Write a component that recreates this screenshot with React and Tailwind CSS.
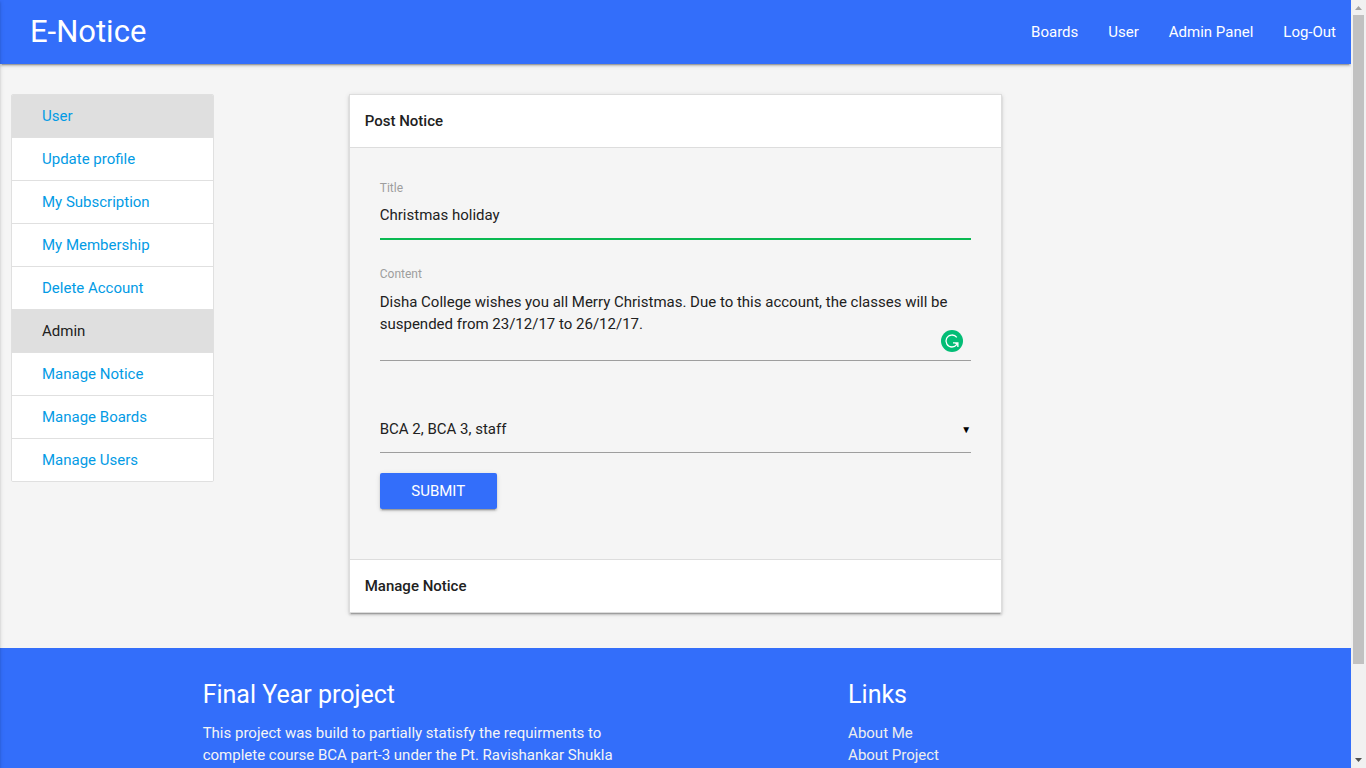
const navLinks = ["Boards", "User", "Admin Panel", "Log-Out"];

const sideItems = [
  { label: "User", tone: "activeLink" },
  { label: "Update profile" },
  { label: "My Subscription" },
  { label: "My Membership" },
  { label: "Delete Account" },
  { label: "Admin", tone: "heading" },
  { label: "Manage Notice" },
  { label: "Manage Boards" },
  { label: "Manage Users" },
];

const footerLinks = ["About Me", "About Project"];

function Navbar() {
  return (
    <nav className="relative z-10 flex h-16 shrink-0 items-center justify-between bg-[#336efa] text-white shadow-[0_2px_2px_0_rgba(0,0,0,0.14),0_1px_5px_0_rgba(0,0,0,0.12),0_3px_1px_-2px_rgba(0,0,0,0.2)]">
      <a href="#" className="pl-[30px] text-[31px] leading-[64px]">
        E-Notice
      </a>
      <ul className="flex">
        {navLinks.map((label) => (
          <li key={label}>
            <a href="#" className="block px-[15px] leading-[64px]">
              {label}
            </a>
          </li>
        ))}
      </ul>
    </nav>
  );
}

function Sidebar() {
  return (
    <aside className="w-1/6 px-[11px]">
      <ul className="divide-y divide-[#e0e0e0] overflow-hidden rounded-xs border border-[#e0e0e0] bg-white">
        {sideItems.map(({ label, tone }) => (
          <li key={label} className={tone ? "bg-[#dfdfdf]" : "bg-white"}>
            {tone === "heading" ? (
              <span className="block px-[30px] py-[10px]">{label}</span>
            ) : (
              <a href="#" className="block px-[30px] py-[10px] text-[#039be5]">
                {label}
              </a>
            )}
          </li>
        ))}
      </ul>
    </aside>
  );
}

function AssistantBadge() {
  return (
    <svg viewBox="0 0 22 22" className="absolute right-2 bottom-[9px] size-[22px]" aria-hidden="true">
      <circle cx="11" cy="11" r="11" fill="#03bd76" />
      <path d="M15.8 7.4A6 6 0 1 0 11 17c2 0 3.6-.8 4.9-2.6" fill="none" stroke="#fff" strokeWidth="1.3" />
      <path d="M12 12.8h4.9v4.2" fill="none" stroke="#fff" strokeWidth="1.3" />
      <path d="M13.8 13h3v3z" fill="#fff" />
    </svg>
  );
}

function PostForm() {
  return (
    <form className="flex flex-col items-start px-[30px] pt-[30px] pb-[50px]" onSubmit={(e) => e.preventDefault()}>
      <label htmlFor="title" className="text-xs leading-5 text-[#9e9e9e]">
        Title
      </label>
      <input
        id="title"
        type="text"
        defaultValue="Christmas holiday"
        className="h-[42px] w-full border-b-2 border-[#0ab952] bg-transparent pb-[6px] outline-none"
      />

      <label htmlFor="content" className="mt-6 text-xs leading-5 text-[#9e9e9e]">
        Content
      </label>
      <div className="relative flex w-full">
        <textarea
          id="content"
          spellCheck={false}
          defaultValue="Disha College wishes you all Merry Christmas. Due to this account, the classes will be suspended from 23/12/17 to 26/12/17."
          className="h-[77px] w-full resize-none overflow-hidden border-b border-[#9e9e9e] bg-transparent pt-[7px] outline-none"
        />
        <AssistantBadge />
      </div>

      <div className="relative mt-[46px] flex w-full">
        <select
          aria-label="Boards"
          className="h-[46px] w-full appearance-none border-b border-[#9e9e9e] bg-transparent pb-[2px] outline-none"
        >
          <option>BCA 2, BCA 3, staff</option>
        </select>
        <span aria-hidden="true" className="pointer-events-none absolute inset-y-0 right-0 flex items-center text-[10px] text-black">
          ▼
        </span>
      </div>

      <button
        type="submit"
        className="mt-5 h-9 min-w-[117px] rounded-xs bg-[#336efa] px-7 text-white uppercase shadow-[0_2px_2px_0_rgba(0,0,0,0.14),0_1px_5px_0_rgba(0,0,0,0.12),0_3px_1px_-2px_rgba(0,0,0,0.2)]"
      >
        Submit
      </button>
    </form>
  );
}

function NoticePanel() {
  return (
    <section className="ml-[8.3333%] w-1/2 px-[11px]">
      <div className="border border-b-0 border-[#dddddd] shadow-[0_2px_2px_0_rgba(0,0,0,0.14),0_1px_5px_0_rgba(0,0,0,0.12),0_3px_1px_-2px_rgba(0,0,0,0.2)]">
        <h2 className="border-b border-[#dddddd] bg-white p-[15px] font-medium">Post Notice</h2>
        <div className="border-b border-[#dddddd]">
          <PostForm />
        </div>
        <h2 className="border-b border-[#dddddd] bg-white p-[15px] font-medium">Manage Notice</h2>
      </div>
    </section>
  );
}

function Footer() {
  return (
    <footer className="grow bg-[#336efa] pt-5 text-white">
      <div className="mx-auto flex w-[70%] justify-between">
        <div className="w-[49%]">
          <h5 className="my-[13px] text-[25px] leading-7">Final Year project</h5>
          <p className="text-[#f5f5f5]">
            This project was build to partially statisfy the requirments to complete course BCA part-3 under the Pt. Ravishankar Shukla
          </p>
        </div>
        <div className="w-[31.75%]">
          <h5 className="my-[13px] text-[25px] leading-7">Links</h5>
          <ul>
            {footerLinks.map((label) => (
              <li key={label}>
                <a href="#" className="text-[#eeeeee]">
                  {label}
                </a>
              </li>
            ))}
          </ul>
        </div>
      </div>
    </footer>
  );
}

function ScrollRail() {
  return (
    <div aria-hidden="true" className="flex w-[15px] shrink-0 flex-col items-center bg-[#f1f1f1]">
      <svg viewBox="0 0 15 15" className="size-[15px]">
        <path d="M4 10h7L7.5 6z" fill="#a3a3a3" />
      </svg>
      <div className="h-[84.5%] w-[11px] bg-[#c1c1c1]" />
      <svg viewBox="0 0 15 15" className="mt-auto size-[15px]">
        <path d="M4 5h7L7.5 9z" fill="#505050" />
      </svg>
    </div>
  );
}

export default function App() {
  return (
    <div className="flex h-screen overflow-hidden bg-[#f5f5f5] font-[Roboto,sans-serif] text-[15px] leading-[22px] text-[#212121]">
      <div className="relative flex min-w-0 grow flex-col overflow-hidden">
        <Navbar />
        <main className="flex shrink-0 items-start pt-[30px] pb-[35px]">
          <Sidebar />
          <NoticePanel />
        </main>
        <Footer />
        <div
          aria-hidden="true"
          className="absolute inset-y-0 right-full z-20 w-4 shadow-[0_2px_2px_0_rgba(0,0,0,0.14),0_1px_5px_0_rgba(0,0,0,0.12),0_3px_1px_-2px_rgba(0,0,0,0.2)]"
        />
      </div>
      <ScrollRail />
    </div>
  );
}
